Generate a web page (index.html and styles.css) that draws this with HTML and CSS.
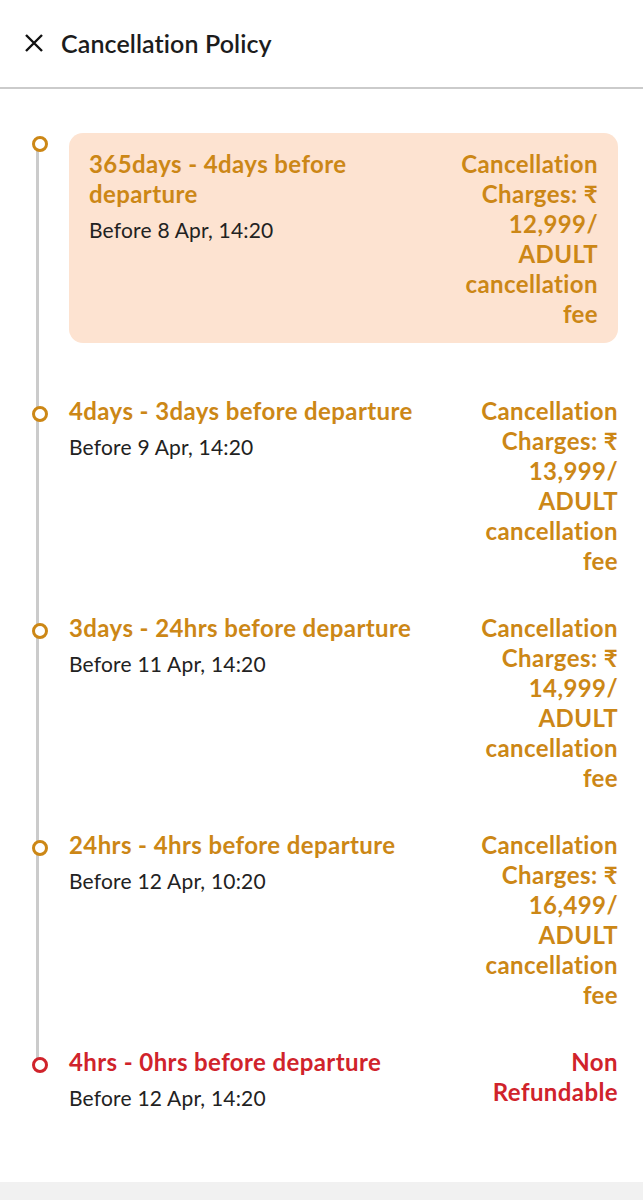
FILE: index.html
```html
<!DOCTYPE html>
<html lang="en">
<head>
  <meta charset="UTF-8" />
  <meta name="viewport" content="width=device-width, initial-scale=1.0" />
  <title>Cancellation Policy</title>
  <link rel="stylesheet" href="styles.css">
</head>
<body>
  <div class="page">
    <header class="topbar">
      <button class="close-btn" aria-label="Close">
        <svg width="20" height="20" viewBox="0 0 20 20">
          <path d="M2 2 L18 18 M18 2 L2 18" stroke="#111" stroke-width="2.4" fill="none" />
        </svg>
      </button>
      <h1>Cancellation Policy</h1>
    </header>

    <main class="content">
      <div class="timeline">
        <div class="slab current">
          <div class="slab-info">
            <div class="slab-title">365days - 4days before departure</div>
            <div class="slab-date">Before 8 Apr, 14:20</div>
          </div>
          <div class="slab-fee">Cancellation Charges: ₹ 12,999/ ADULT cancellation fee</div>
        </div>

        <div class="slab">
          <div class="slab-info">
            <div class="slab-title">4days - 3days before departure</div>
            <div class="slab-date">Before 9 Apr, 14:20</div>
          </div>
          <div class="slab-fee">Cancellation Charges: ₹ 13,999/ ADULT cancellation fee</div>
        </div>

        <div class="slab">
          <div class="slab-info">
            <div class="slab-title">3days - 24hrs before departure</div>
            <div class="slab-date">Before 11 Apr, 14:20</div>
          </div>
          <div class="slab-fee">Cancellation Charges: ₹ 14,999/ ADULT cancellation fee</div>
        </div>

        <div class="slab">
          <div class="slab-info">
            <div class="slab-title">24hrs - 4hrs before departure</div>
            <div class="slab-date">Before 12 Apr, 10:20</div>
          </div>
          <div class="slab-fee">Cancellation Charges: ₹ 16,499/ ADULT cancellation fee</div>
        </div>

        <div class="slab no-refund">
          <div class="slab-info">
            <div class="slab-title">4hrs - 0hrs before departure</div>
            <div class="slab-date">Before 12 Apr, 14:20</div>
          </div>
          <div class="slab-fee">Non Refundable</div>
        </div>
      </div>
    </main>

    <footer class="bottom-strip"></footer>
  </div>
</body>
</html>
```

FILE: styles.css
```css
:root {
  --orange: #cc8716;
  --red: #d0232b;
  --peach: #fde3d1;
  --rail: #cbcbcb;
}

* {
  box-sizing: border-box;
}

body {
  margin: 0;
  font-family: 'Lato', 'Noto Sans', sans-serif;
  background: #fff;
  color: #222;
}

.page {
  min-height: 1200px;
  display: flex;
  flex-direction: column;
}

.topbar {
  height: 89px;
  display: flex;
  align-items: center;
  gap: 17px;
  padding: 0 0 2px 24px;
  border-bottom: 2px solid #cbcbcb;
}

.close-btn {
  width: 20px;
  height: 20px;
  padding: 0;
  border: none;
  background: none;
  display: flex;
}

.topbar h1 {
  margin: 0;
  font-size: 25px;
  font-weight: 600;
  letter-spacing: 0.1px;
  color: #1c1c1c;
}

.content {
  flex: 1;
  padding: 44px 25px 0 24px;
}

.timeline {
  position: relative;
}

/* the grey rail running through all the dots */
.timeline::before {
  content: "";
  position: absolute;
  left: 12px;
  top: 8px;
  bottom: 54px;
  width: 3px;
  background: var(--rail);
}

.slab {
  position: relative;
  margin-left: 45px;
  margin-bottom: 37px;
  display: flex;
  gap: 16px;
}

.slab::before {
  content: "";
  position: absolute;
  left: -37px;
  top: 10px;
  width: 10px;
  height: 10px;
  border: 3px solid var(--orange);
  border-radius: 50%;
  background: #fff;
}

.slab.current {
  background: var(--peach);
  border-radius: 14px;
  padding: 16px 20px 14px;
  margin-bottom: 53px;
}

.slab.current::before {
  top: 3px;
}

.slab-info {
  flex: 1;
}

.slab-title {
  font-size: 24px;
  font-weight: 700;
  line-height: 30px;
  letter-spacing: 0.4px;
  color: var(--orange);
}

.slab-date {
  margin-top: 7px;
  font-size: 21px;
  line-height: 28px;
  letter-spacing: 0.2px;
  color: #222;
}

.slab-fee {
  flex: 0 0 146px;
  text-align: right;
  font-size: 24px;
  font-weight: 700;
  line-height: 30px;
  letter-spacing: 0.4px;
  color: var(--orange);
}

.no-refund .slab-title,
.no-refund .slab-fee {
  color: var(--red);
}

.no-refund::before {
  border-color: var(--red);
}

.bottom-strip {
  height: 18px;
  background: #f1f1f1;
}
```
